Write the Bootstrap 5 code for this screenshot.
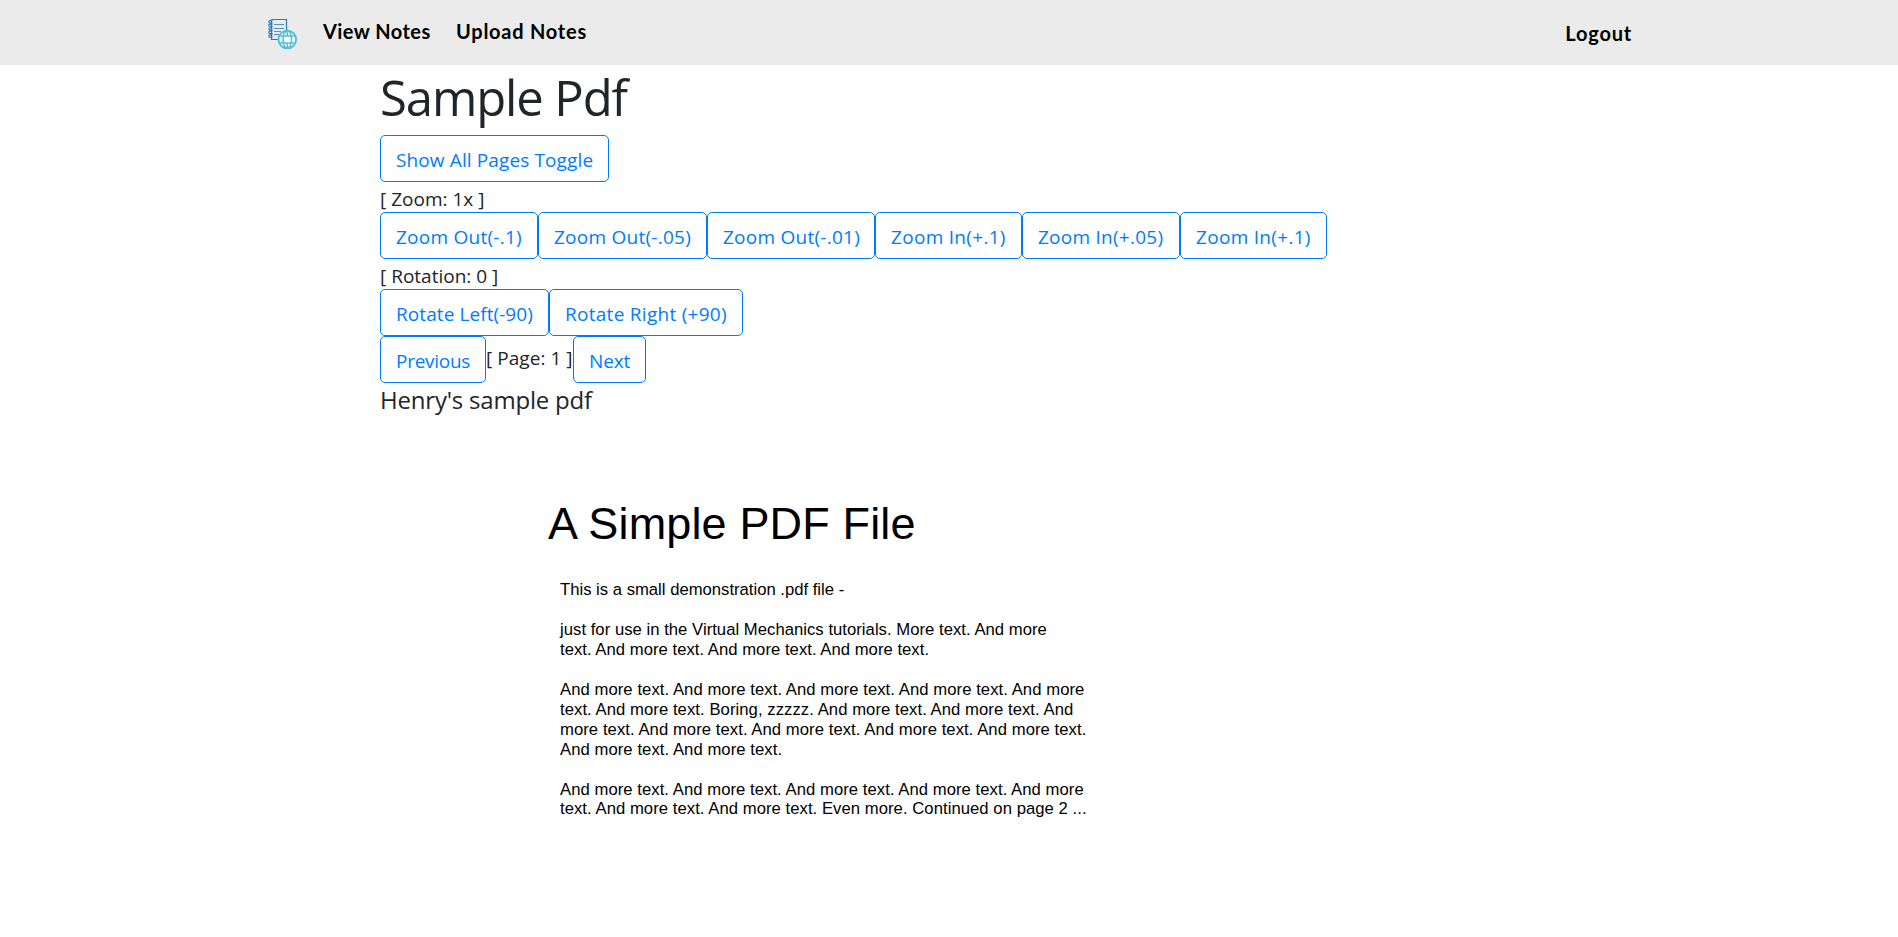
<!DOCTYPE html>
<html lang="en">
<head>
<meta charset="utf-8">
<meta name="viewport" content="width=device-width, initial-scale=1">
<title>Sample Pdf</title>
<link href="https://cdn.jsdelivr.net/npm/bootstrap@5.3.0/dist/css/bootstrap.min.css" rel="stylesheet">
<script src="https://cdn.jsdelivr.net/npm/bootstrap@5.3.0/dist/js/bootstrap.bundle.min.js"></script>
<style>
html { font-size: 20px; }
body { font-family: "Open Sans", "Noto Sans", sans-serif; color: #212529; line-height: 30px; overflow: hidden; }
.topbar { height: 65px; background: #ebebeb; }
.topbar-inner { width: 1368px; height: 65px; padding-left: 2px; }
.topbar-inner .navbar-brand { width: 31px; margin-right: 25px; }
.topbar-inner .nav-link { font-family: Lato, sans-serif; font-weight: 700; font-size: 20px; line-height: 30px; color: #000; padding: 0; margin-top: 16px; white-space: nowrap; }
.topbar-inner .nav-view { letter-spacing: .45px; width: 133px; }
.topbar-inner .nav-upload { letter-spacing: .75px; }
.topbar-inner .nav-logout { letter-spacing: .8px; margin-top: 18px; margin-right: 1px; }
.viewer { width: 1140px; padding-left: 1px; }
.viewer h1 { font-size: 49px; line-height: 60px; font-weight: 400; letter-spacing: -1.1px; margin: 0 0 8px; padding-top: 2px; }
.btn-outline-primary { --bs-btn-color: #007bff; --bs-btn-border-color: #007bff; --bs-btn-border-radius: 5px; --bs-btn-padding-x: 15px; --bs-btn-padding-y: 7.5px; font-size: 19px; line-height: 30px; height: 47px; letter-spacing: .25px; white-space: nowrap; flex: none; text-align: left; }
.btn-outline-primary span { display: block; padding-top: 1px; margin-bottom: -1px; }
.w-toggle { width: 229px; letter-spacing: .12px; }
.w-short { width: 147px; letter-spacing: .3px; }
.w-mid { width: 158px; }
.w-long { width: 169px; }
.w-hundredth { width: 168px; }
.w-left { width: 169px; letter-spacing: .08px; }
.w-right { width: 194px; letter-spacing: .28px; }
.w-prev { width: 106px; letter-spacing: -.28px; }
.w-next { width: 73px; letter-spacing: -.15px; }
.status { font-size: 19px; line-height: 30px; height: 30px; padding-top: 2px; letter-spacing: 0; white-space: nowrap; }
.page-status { width: 87px; margin-top: 5px; letter-spacing: .05px; }
.caption-line { font-size: 24px; line-height: 30px; height: 30px; padding-top: 1.5px; font-weight: 400; letter-spacing: -.2px; margin: 0; }
.pdf-page { font-family: "Liberation Sans", Arial, sans-serif; color: #000; margin: 86px 0 0 168px; white-space: nowrap; }
.pdf-title { font-size: 45px; line-height: 50px; font-weight: 400; letter-spacing: .15px; margin: 0 0 31px; }
.pdf-page p { font-size: 16.667px; line-height: 20px; letter-spacing: .06px; margin: 0 0 20px 12px; }
.pdf-page .pdf-intro { letter-spacing: 0; }
.pdf-page .pdf-second { letter-spacing: .03px; }
.pdf-page .pdf-last { line-height: 19.2px; letter-spacing: .05px; }
</style>
</head>
<body>
<nav class="topbar">
  <div class="topbar-inner mx-auto d-flex align-items-start">
    <span class="navbar-brand p-0">
      <svg class="d-block" width="31" height="65" viewBox="0 0 31 65" fill="none">
        <path d="M4.5 19.5H19.5V30.5M4.500 19.500V39.500H12" stroke="#2b7ab3" stroke-width="1.2"/>
        <path d="M7 24.500H17M7 28.500H17M7 31.500H14M7 34.500H12" stroke="#4b93c3" stroke-width="1.1"/>
        <path d="M5.500 20.500H2.500a1.200 1.200 0 0 0 0 2.200H5.500M5.500 24.100H2.500a1.200 1.200 0 0 0 0 2.200H5.500M5.500 27.700H2.500a1.200 1.200 0 0 0 0 2.200H5.500M5.500 31.300H2.500a1.200 1.200 0 0 0 0 2.200H5.500M5.500 34.900H2.500a1.200 1.200 0 0 0 0 2.200H5.500" stroke="#2b7ab3" stroke-width="1.1"/>
        <circle cx="20.300" cy="39.500" r="8.800" fill="#fff" stroke="#4fc1da" stroke-width="1.900"/>
        <ellipse cx="20.300" cy="39.500" rx="4.200" ry="8.800" stroke="#4fc1da" stroke-width="1.600"/>
        <path d="M12.500 36H28M12.500 43H28M20.300 31V36M20.300 43V48" stroke="#4fc1da" stroke-width="1.600"/>
      </svg>
    </span>
    <a class="nav-link nav-view" href="#">View Notes</a>
    <a class="nav-link nav-upload" href="#">Upload Notes</a>
    <a class="nav-link nav-logout ms-auto" href="#">Logout</a>
  </div>
</nav>
<main class="viewer mx-auto">
  <h1>Sample Pdf</h1>
  <div class="d-flex"><button class="btn btn-outline-primary w-toggle"><span>Show All Pages Toggle</span></button></div>
  <div class="status">[ Zoom: 1x ]</div>
  <div class="d-flex">
    <button class="btn btn-outline-primary w-mid"><span>Zoom Out(-.1)</span></button>
    <button class="btn btn-outline-primary w-long"><span>Zoom Out(-.05)</span></button>
    <button class="btn btn-outline-primary w-hundredth"><span>Zoom Out(-.01)</span></button>
    <button class="btn btn-outline-primary w-short"><span>Zoom In(+.1)</span></button>
    <button class="btn btn-outline-primary w-mid"><span>Zoom In(+.05)</span></button>
    <button class="btn btn-outline-primary w-short"><span>Zoom In(+.1)</span></button>
  </div>
  <div class="status">[ Rotation: 0 ]</div>
  <div class="d-flex">
    <button class="btn btn-outline-primary w-left"><span>Rotate Left(-90)</span></button>
    <button class="btn btn-outline-primary w-right"><span>Rotate Right (+90)</span></button>
  </div>
  <div class="d-flex">
    <button class="btn btn-outline-primary w-prev"><span>Previous</span></button>
    <div class="status page-status">[ Page: 1 ]</div>
    <button class="btn btn-outline-primary w-next"><span>Next</span></button>
  </div>
  <h5 class="caption-line">Henry's sample pdf</h5>
  <article class="pdf-page">
    <h2 class="pdf-title">A Simple PDF File</h2>
    <p class="pdf-intro">This is a small demonstration .pdf file -</p>
    <p class="pdf-second">just for use in the Virtual Mechanics tutorials. More text. And more<br>text. And more text. And more text. And more text.</p>
    <p>And more text. And more text. And more text. And more text. And more<br>text. And more text. Boring, zzzzz. And more text. And more text. And<br>more text. And more text. And more text. And more text. And more text.<br>And more text. And more text.</p>
    <p class="pdf-last">And more text. And more text. And more text. And more text. And more<br>text. And more text. And more text. Even more. Continued on page 2 ...</p>
  </article>
</main>
</body>
</html>
